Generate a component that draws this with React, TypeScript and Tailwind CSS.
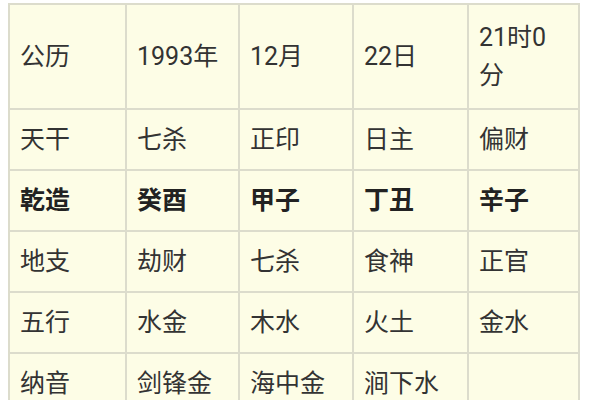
import React from 'react'

const rows: { cells: React.ReactNode[]; bold?: boolean }[] = [
  { cells: ['公历', '1993年', '12月', '22日', <>21时0<br />分</>] },
  { cells: ['天干', '七杀', '正印', '日主', '偏财'] },
  { cells: ['乾造', '癸酉', '甲子', '丁丑', '辛子'], bold: true },
  { cells: ['地支', '劫财', '七杀', '食神', '正官'] },
  { cells: ['五行', '水金', '木水', '火土', '金水'] },
  { cells: ['纳音', '剑锋金', '海中金', '涧下水', ''] },
]

const widths = ['w-[117px]', 'w-[113px]', 'w-[114px]', 'w-[115px]', 'w-[111px]']

export default function App() {
  return (
    <div className="w-[600px] h-[400px] overflow-hidden bg-white pl-[8px] pt-[3px]">
      <table
        className="w-[570px] border-collapse bg-[#fdfde6] text-[#333] text-[25px] leading-[38px] table-fixed"
        style={{ fontFamily: '"Roboto", "Noto Sans CJK SC", sans-serif' }}
      >
        <colgroup>
          {widths.map((w, i) => (
            <col key={i} className={w} />
          ))}
        </colgroup>
        <tbody>
          {rows.map((row, ri) => (
            <tr key={ri} className={ri === 0 ? 'h-[105px]' : 'h-[61px]'}>
              {row.cells.map((c, ci) => (
                <td
                  key={ci}
                  className={`border-2 border-[#dcdccc] px-[10px] align-middle ${row.bold ? 'font-bold text-[#222]' : ''}`}
                >
                  {c}
                </td>
              ))}
            </tr>
          ))}
        </tbody>
      </table>
    </div>
  )
}
